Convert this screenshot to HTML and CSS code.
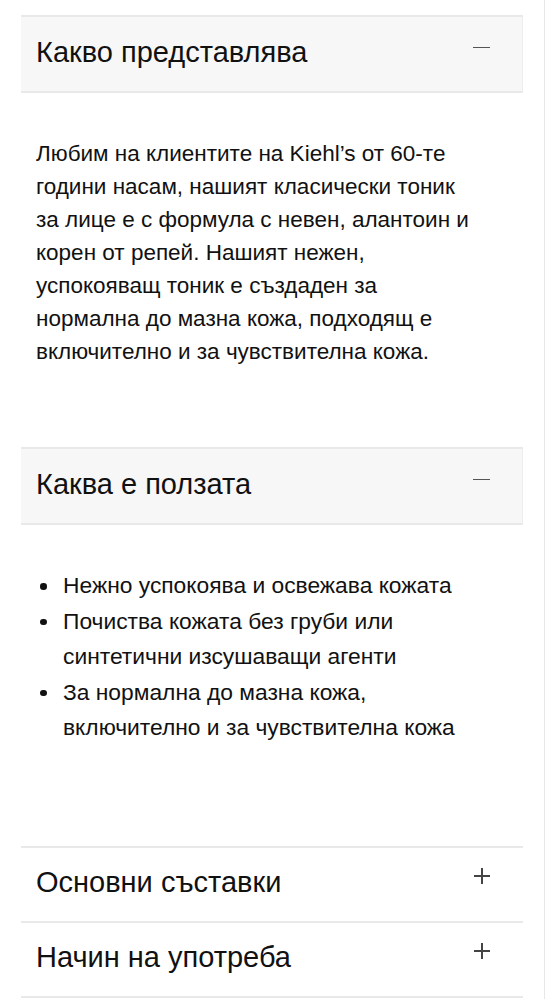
FILE: index.html
```html
<!DOCTYPE html>
<html lang="bg">
<head>
<meta charset="utf-8">
<link rel="stylesheet" href="styles.css">
</head>
<body>
<div class="page">
  <div class="accordion">
    <section class="item open">
      <div class="head">
        <h2 class="title">Какво представлява</h2>
        <span class="icon minus"></span>
      </div>
      <div class="body">
        <p class="text">Любим на клиентите на Kiehl’s от 60-те години насам, нашият класически тоник за лице е с формула с невен, алантоин и корен от репей. Нашият нежен, успокояващ тоник е създаден за нормална до мазна кожа, подходящ е включително и за чувствителна кожа.</p>
      </div>
    </section>
    <section class="item open">
      <div class="head">
        <h2 class="title">Каква е ползата</h2>
        <span class="icon minus"></span>
      </div>
      <div class="body body-list">
        <ul class="list">
          <li>Нежно успокоява и освежава кожата</li>
          <li>Почиства кожата без груби или синтетични изсушаващи агенти</li>
          <li>За нормална до мазна кожа, включително и за чувствителна кожа</li>
        </ul>
      </div>
    </section>
    <section class="item closed">
      <div class="head">
        <h2 class="title">Основни съставки</h2>
        <span class="icon plus"></span>
      </div>
    </section>
    <section class="item closed">
      <div class="head">
        <h2 class="title">Начин на употреба</h2>
        <span class="icon plus"></span>
      </div>
    </section>
  </div>
</div>
</body>
</html>
```

FILE: styles.css
```css
html, body {
  margin: 0;
  padding: 0;
  background: #ffffff;
}
body {
  font-family: "Liberation Sans", Arial, Helvetica, sans-serif;
  color: #111111;
}
.page {
  width: 545px;
  min-height: 999px;
  box-sizing: border-box;
  border-right: 1px solid #e6e6e6;
  padding: 15px 21px 0 21px;
}
.accordion {
  display: flex;
  flex-direction: column;
}
.item.open .head {
  background: #f7f7f7;
  border-top: 2px solid #e9e9e9;
  border-bottom: 2px solid #e9e9e9;
  box-shadow: inset -1px 0 0 #ededed;
}
.item.closed .head {
  border-top: 2px solid #e9e9e9;
}
.item.closed:last-child {
  border-bottom: 2px solid #e9e9e9;
}
.head {
  height: 74px;
  display: flex;
  align-items: center;
  justify-content: space-between;
  padding: 0 33px 0 15px;
}
.item.closed .head {
  height: 73px;
}
.title {
  margin: 0;
  font-weight: 400;
  font-size: 29px;
  line-height: 34px;
  color: #111;
  position: relative;
  top: -2px;
}
.icon {
  position: relative;
  width: 17px;
  height: 16px;
  flex: none;
  top: -6px;
}
.minus::before {
  content: "";
  position: absolute;
  left: 0;
  right: 0;
  top: 7px;
  height: 1.4px;
  background: #555;
}
.plus {
  width: 16px;
  top: -8px;
}
.plus::before,
.plus::after {
  content: "";
  position: absolute;
  background: #444;
}
.plus::before {
  left: 0;
  right: 0;
  top: 7.3px;
  height: 1.3px;
}
.plus::after {
  top: 0;
  bottom: 0;
  left: 7.4px;
  width: 1.3px;
}
.body {
  padding: 44px 15px 79px 15px;
}
.text {
  margin: 0;
  max-width: 444px;
  font-size: 22.5px;
  line-height: 33px;
  color: #111;
}
.body-list {
  padding: 43px 15px 100px 15px;
}
.list {
  margin: 0;
  padding: 0;
  list-style: none;
  max-width: 444px;
  font-size: 22.8px;
  line-height: 35.5px;
  color: #111;
}
.list li {
  position: relative;
  padding-left: 27px;
}
.list li::before {
  content: "";
  position: absolute;
  left: 4px;
  top: 15px;
  width: 6.5px;
  height: 6.5px;
  border-radius: 50%;
  background: #111;
}
```
